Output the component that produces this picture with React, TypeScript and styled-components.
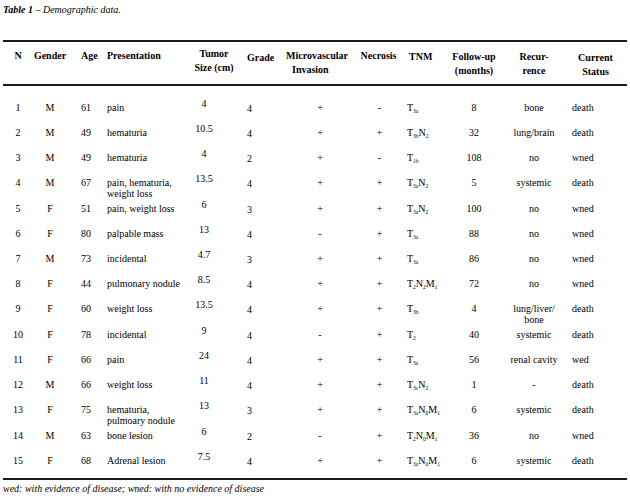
import React from 'react';
import styled, { createGlobalStyle } from 'styled-components';

const GlobalStyle = createGlobalStyle`
  html, body {
    margin: 0;
    padding: 0;
    background: #ffffff;
  }
  body {
    font-family: 'Liberation Serif', 'Times New Roman', serif;
    color: #000;
  }
`;

const Page = styled.div`
  width: 630px;
  height: 496px;
  padding: 4px 0 0 3px;
  box-sizing: border-box;
  overflow: hidden;
`;

const Caption = styled.div`
  font-size: 10px;
  line-height: 12px;
  font-style: italic;
  margin-bottom: 24px;
`;

const Table = styled.table`
  width: 624px;
  table-layout: fixed;
  border-collapse: collapse;
  border-top: 2px solid #1a1a1a;
  border-bottom: 2px solid #1a1a1a;
  font-size: 10px;
`;

const HeadRow = styled.tr`
  border-bottom: 2px solid #1a1a1a;
`;

const HeadCell = styled.th<{ $align?: string; $pl?: number; $shift?: number }>`
  font-weight: bold;
  font-size: 10px;
  line-height: 14px;
  vertical-align: top;
  text-align: ${(p) => p.$align || 'center'};
  padding: ${(p) => 7 + (p.$shift || 0)}px 0 0 ${(p) => p.$pl || 0}px;
  height: ${(p) => 35 - (p.$shift || 0)}px;
  white-space: nowrap;
`;

const Indent = styled.span`
  padding-left: 6px;
`;

const Spacer = styled.td<{ $h: number }>`
  height: ${(p) => p.$h}px;
  padding: 0;
`;

const Cell = styled.td<{ $align: string; $pl?: number; $pr?: number; $shift?: number }>`
  font-size: 10px;
  line-height: 11px;
  vertical-align: top;
  white-space: nowrap;
  text-align: ${(p) => p.$align};
  padding: ${(p) => 4 + (p.$shift || 0)}px ${(p) => p.$pr || 0}px 0 ${(p) => p.$pl || 0}px;
  height: ${(p) => 21 - (p.$shift || 0)}px;
  overflow: visible;
`;

const Sub = styled.sub`
  font-size: 5.5px;
  line-height: 0;
  vertical-align: -2px;
`;

const Footnote = styled.div`
  font-size: 10px;
  line-height: 12px;
  font-style: italic;
  margin-top: 3px;
`;

const widths = [30, 34, 38, 84, 50, 45, 72, 45, 43, 60, 60, 63];

type Col = { align: string; pl?: number; pr?: number; shift?: number };

const bodyCols: Col[] = [
  { align: 'center' },
  { align: 'center' },
  { align: 'left', pl: 14 },
  { align: 'left', pl: 2 },
  { align: 'center', pr: 20, shift: -4 },
  { align: 'left', pl: 8, shift: 1 },
  { align: 'center' },
  { align: 'center', pl: 2 },
  { align: 'left', pl: 6 },
  { align: 'center' },
  { align: 'center' },
  { align: 'left', pl: 8 },
];

type Tnm = [string, string?][];

type Row = [string, string, string, string[], string, string, string, string, Tnm, string, string[], string];

const rows: Row[] = [
  ['1', 'M', '61', ['pain'], '4', '4', '+', '-', [['T', '3a']], '8', ['bone'], 'death'],
  ['2', 'M', '49', ['hematuria'], '10.5', '4', '+', '+', [['T', '3b'], ['N', '2']], '32', ['lung/brain'], 'death'],
  ['3', 'M', '49', ['hematuria'], '4', '2', '+', '-', [['T', '1b']], '108', ['no'], 'wned'],
  ['4', 'M', '67', ['pain, hematuria,', 'weight loss'], '13.5', '4', '+', '+', [['T', '3a'], ['N', '2']], '5', ['systemic'], 'death'],
  ['5', 'F', '51', ['pain, weight loss'], '6', '3', '+', '+', [['T', '3a'], ['N', '2']], '100', ['no'], 'wned'],
  ['6', 'F', '80', ['palpable mass'], '13', '4', '-', '+', [['T', '3a']], '88', ['no'], 'wned'],
  ['7', 'M', '73', ['incidental'], '4.7', '3', '+', '+', [['T', '3a']], '86', ['no'], 'wned'],
  ['8', 'F', '44', ['pulmonary nodule'], '8.5', '4', '+', '+', [['T', '2'], ['N', '2'], ['M', '1']], '72', ['no'], 'wned'],
  ['9', 'F', '60', ['weight loss'], '13.5', '4', '+', '+', [['T', '3b']], '4', ['lung/liver/', 'bone'], 'death'],
  ['10', 'F', '78', ['incidental'], '9', '4', '-', '+', [['T', '2']], '40', ['systemic'], 'death'],
  ['11', 'F', '66', ['pain'], '24', '4', '+', '+', [['T', '3a']], '56', ['renal cavity'], 'wed'],
  ['12', 'M', '66', ['weight loss'], '11', '4', '+', '+', [['T', '3c'], ['N', '2']], '1', ['-'], 'death'],
  ['13', 'F', '75', ['hematuria,', 'pulmoary nodule'], '13', '3', '+', '+', [['T', '3a'], ['N', '0'], ['M', '1']], '6', ['systemic'], 'death'],
  ['14', 'M', '63', ['bone lesion'], '6', '2', '-', '+', [['T', '2'], ['N', '0'], ['M', '1']], '36', ['no'], 'wned'],
  ['15', 'F', '68', ['Adrenal lesion'], '7.5', '4', '+', '+', [['T', '3a'], ['N', '0'], ['M', '1']], '6', ['systemic'], 'death'],
];

const Lines = ({ lines }: { lines: string[] }) => (
  <>
    {lines.map((l, i) => (
      <React.Fragment key={i}>
        {i > 0 && <br />}
        {l}
      </React.Fragment>
    ))}
  </>
);

const TnmValue = ({ parts }: { parts: Tnm }) => (
  <>
    {parts.map(([letter, sub], i) => (
      <React.Fragment key={i}>
        {letter}
        {sub && <Sub>{sub}</Sub>}
      </React.Fragment>
    ))}
  </>
);

export default function App() {
  return (
    <Page>
      <GlobalStyle />
      <Caption>
        <b>Table 1</b> – Demographic data.
      </Caption>
      <Table>
        <colgroup>
          {widths.map((w, i) => (
            <col key={i} style={{ width: w }} />
          ))}
        </colgroup>
        <thead>
          <HeadRow>
            <HeadCell>N</HeadCell>
            <HeadCell>Gender</HeadCell>
            <HeadCell $align="left" $pl={14}>Age</HeadCell>
            <HeadCell $align="left" $pl={2}>Presentation</HeadCell>
            <HeadCell $shift={-2}>
              Tumor
              <br />
              Size (cm)
            </HeadCell>
            <HeadCell $align="left" $pl={8} $shift={2}>Grade</HeadCell>
            <HeadCell $align="left" $pl={2}>
              Microvascular
              <br />
              <Indent>Invasion</Indent>
            </HeadCell>
            <HeadCell>Necrosis</HeadCell>
            <HeadCell $align="left" $pl={8} $shift={1}>TNM</HeadCell>
            <HeadCell $shift={1}>
              Follow-up
              <br />
              (months)
            </HeadCell>
            <HeadCell $shift={1}>
              Recur-
              <br />
              rence
            </HeadCell>
            <HeadCell $shift={2}>
              Current
              <br />
              Status
            </HeadCell>
          </HeadRow>
        </thead>
        <tbody>
          <tr>
            <Spacer $h={12} colSpan={12} />
          </tr>
          {rows.map((r) => (
            <tr key={r[0]}>
              {r.map((v, i) => {
                const c = bodyCols[i];
                let content: React.ReactNode = v as string;
                if (i === 3 || i === 10) content = <Lines lines={v as string[]} />;
                if (i === 8) content = <TnmValue parts={v as Tnm} />;
                return (
                  <Cell key={i} $align={c.align} $pl={c.pl} $pr={c.pr} $shift={c.shift}>
                    {content}
                  </Cell>
                );
              })}
            </tr>
          ))}
          <tr>
            <Spacer $h={2} colSpan={12} />
          </tr>
        </tbody>
      </Table>
      <Footnote>wed: with evidence of disease; wned: with no evidence of disease</Footnote>
    </Page>
  );
}
